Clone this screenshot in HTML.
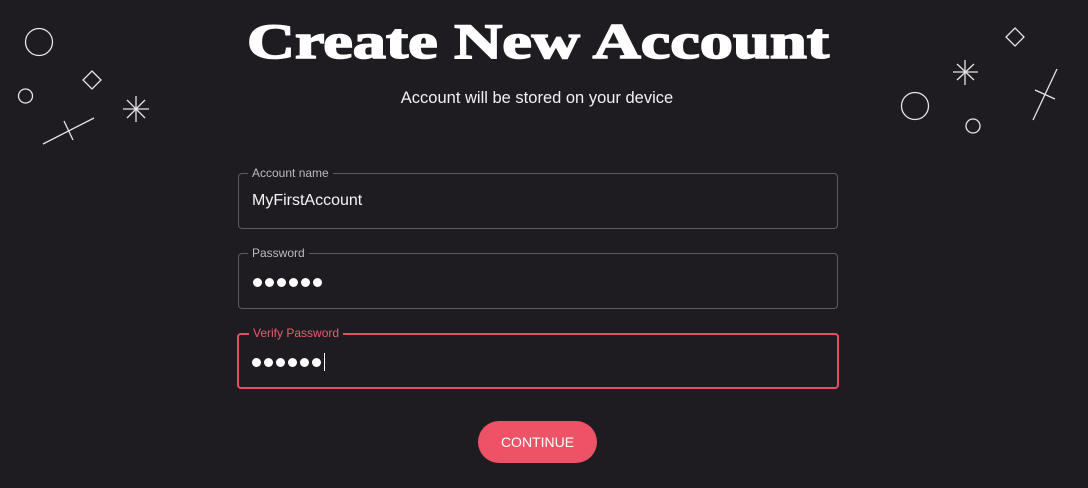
<!DOCTYPE html>
<html><head><style>
body{margin:0;width:1088px;height:488px;background:#1f1c21;overflow:hidden;font-family:"Liberation Sans",sans-serif;position:relative}
.sub{position:absolute;top:89px;left:-7px;width:1088px;text-align:center;color:#f2f0f2;font-size:16.5px}
.f{position:absolute;left:238px;width:598px;height:54px;border:1px solid #5e5a60;border-radius:4px}
.f .l{position:absolute;top:-9px;left:9px;padding:0 4px;background:#1f1c21;color:#bdb9be;font-size:12px;line-height:16px}
.f .v{position:absolute;left:13px;top:17px;color:#f5f3f5;font-size:16px;line-height:20px}
.d{position:absolute;left:14px;top:22px;height:12px;display:flex;align-items:center}
.d i{display:block;width:9px;height:9px;border-radius:50%;background:#fff;margin-right:3px;flex:none}
.red{border:2px solid #e94d62;left:237px;height:52px}
.red .l{color:#ee5a6e;top:-10px;left:10px}
.btn{position:absolute;left:478px;top:421px;width:119px;height:42px;border-radius:21px;background:#ee5266;color:#fff;font-size:14px;text-align:center;line-height:42px}
</style></head><body>
<svg width="1088" height="488" style="position:absolute;left:0;top:0">
<text x="247" y="58" textLength="582" lengthAdjust="spacingAndGlyphs" font-family="Liberation Serif,serif" font-weight="bold" font-size="50" fill="#fff" stroke="#fff" stroke-width="1.6">Create New Account</text>
<g stroke="#e6e4e6" stroke-width="1.3" fill="none">
<circle cx="39" cy="42" r="13.5"/>
<circle cx="25.5" cy="96" r="7"/>
<path d="M92 71 L101 80 L92 89 L83 80Z"/>
<path d="M43 144 L94 118 M64 121 L73 140"/>
<path d="M136 96 V122 M123 109 H149 M127 100 L145 118 M145 100 L127 118"/>
<circle cx="915" cy="106" r="13.5"/>
<circle cx="973" cy="126" r="7"/>
<path d="M1015 28 L1024 37 L1015 46 L1006 37Z"/>
<path d="M965 60 V85 M953 72 H978 M957 64 L974 80 M974 64 L957 80"/>
<path d="M1057 69 L1033 120 M1035 90 L1055 99"/>
</g></svg>
<div class="sub">Account will be stored on your device</div>
<div class="f" style="top:173px"><span class="l">Account name</span><span class="v">MyFirstAccount</span></div>
<div class="f" style="top:253px"><span class="l">Password</span><span class="d"><i></i><i></i><i></i><i></i><i></i><i></i></span></div>
<div class="f red" style="top:333px"><span class="l">Verify Password</span><span class="d" style="left:13px;top:21px"><i></i><i></i><i></i><i></i><i></i><i></i><b style="display:block;width:1px;height:18px;background:#fff;margin-left:0"></b></span></div>
<div class="btn">CONTINUE</div>
</body></html>
